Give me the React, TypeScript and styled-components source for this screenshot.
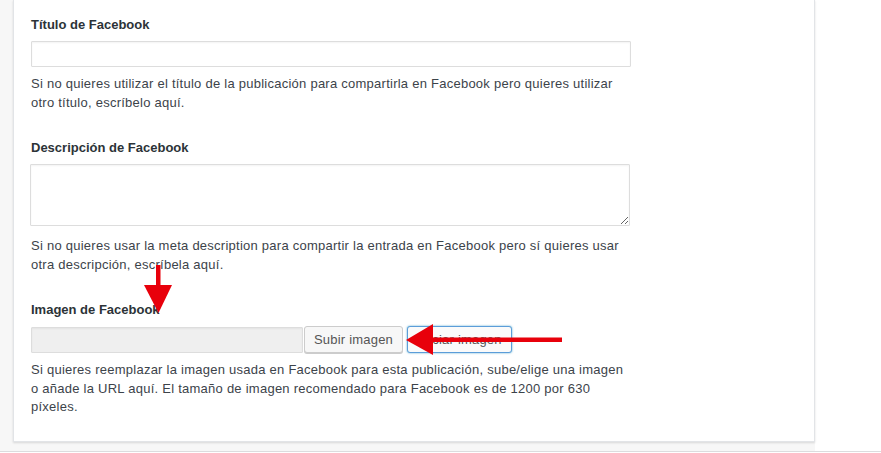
import styled, { createGlobalStyle } from "styled-components";

const GlobalStyle = createGlobalStyle`
  html, body {
    margin: 0;
    padding: 0;
    background: #fff;
  }
  body {
    font-family: "Liberation Sans", Arial, sans-serif;
    font-size: 13px;
    color: #3c434a;
  }
`;

const StyledPage = styled.div`
  position: relative;
  width: 881px;
  height: 453px;
  overflow: hidden;
`;

const StyledBase = styled.div`
  border-bottom: 1px solid #dcdcde;
`;

const StyledGutter = styled.div`
  width: 815px;
  background: #f7f7f7;
  padding: 0 0 9px 13px;
  box-sizing: border-box;
`;

const StyledPanel = styled.div`
  width: 802px;
  box-sizing: border-box;
  background: #fff;
  border: 1px solid #e2e4e7;
  border-top: none;
  box-shadow: 0 1px 2px rgba(0, 0, 0, 0.13);
  padding: 16px 17px 24px;
`;

const StyledField = styled.div<{ last?: boolean }>`
  margin-bottom: ${(props) => (props.last ? "0" : "27px")};
`;

const StyledLabel = styled.label`
  display: block;
  font-weight: 700;
  font-size: 13px;
  line-height: 18px;
  color: #2c3338;
  margin-bottom: 7px;
`;

const StyledInput = styled.input<{ readOnlyLook?: boolean }>`
  display: block;
  box-sizing: border-box;
  width: 600px;
  height: 26px;
  margin: 0;
  padding: 3px 6px;
  font: inherit;
  border: 1px solid #dddddd;
  border-radius: 1px;
  background: ${(props) => (props.readOnlyLook ? "#efefef" : "#fff")};
  box-shadow: inset 0 1px 2px rgba(0, 0, 0, 0.05);
  outline: none;
`;

const StyledTextarea = styled.textarea`
  display: block;
  box-sizing: border-box;
  width: 600px;
  height: 62px;
  margin: 0 0 0 -1px;
  padding: 4px 6px;
  font: inherit;
  border: 1px solid #dddddd;
  border-radius: 1px;
  box-shadow: inset 0 1px 2px rgba(0, 0, 0, 0.05);
  outline: none;
`;

const StyledHelp = styled.p<{ space?: number }>`
  margin: ${(props) => props.space ?? 8}px 0 0;
  font-size: 13px;
  letter-spacing: 0.25px;
  line-height: 18.5px;
  color: #3c434a;
  width: 600px;
`;

const StyledUploadRow = styled.div`
  display: flex;
  align-items: center;
  height: 27px;
`;

const StyledButton = styled.button<{ focused?: boolean }>`
  box-sizing: border-box;
  height: 27px;
  margin-left: ${(props) => (props.focused ? "4px" : "1px")};
  padding: 0 9px;
  font: inherit;
  font-size: 13px;
  letter-spacing: 0.2px;
  color: #555;
  background: ${(props) => (props.focused ? "#fafafa" : "#f7f7f7")};
  border: 1px solid ${(props) => (props.focused ? "#5b9dd9" : "#cccccc")};
  border-radius: 3px;
  box-shadow: ${(props) =>
    props.focused
      ? "0 0 2px rgba(30, 140, 190, 0.8)"
      : "0 1px 0 #cccccc"};
  white-space: nowrap;
`;

const StyledOverlay = styled.svg`
  position: absolute;
  left: 0;
  top: 0;
  pointer-events: none;
`;

const App = () => {
  return (
    <>
      <GlobalStyle />
      <StyledPage>
        <StyledBase>
          <StyledGutter>
            <StyledPanel>
              <StyledField>
                <StyledLabel>Título de Facebook</StyledLabel>
                <StyledInput type="text" />
                <StyledHelp>
                  Si no quieres utilizar el título de la publicación para
                  compartirla en Facebook pero quieres utilizar otro título,
                  escríbelo aquí.
                </StyledHelp>
              </StyledField>

              <StyledField>
                <StyledLabel>Descripción de Facebook</StyledLabel>
                <StyledTextarea />
                <StyledHelp space={11}>
                  Si no quieres usar la meta description para compartir la
                  entrada en Facebook pero sí quieres usar otra descripción,
                  escríbela aquí.
                </StyledHelp>
              </StyledField>

              <StyledField last>
                <StyledLabel>Imagen de Facebook</StyledLabel>
                <StyledUploadRow>
                  <StyledInput type="text" readOnlyLook readOnly style={{ width: 272 }} />
                  <StyledButton>Subir imagen</StyledButton>
                  <StyledButton focused>Vaciar imagen</StyledButton>
                </StyledUploadRow>
                <StyledHelp>
                  Si quieres reemplazar la imagen usada en Facebook para esta
                  publicación, sube/elige una imagen o añade la URL aquí. El
                  tamaño de imagen recomendado para Facebook es de 1200 por
                  630 píxeles.
                </StyledHelp>
              </StyledField>
            </StyledPanel>
          </StyledGutter>
        </StyledBase>

        {/* red annotation arrows */}
        <StyledOverlay width="881" height="453" viewBox="0 0 881 453">
          <rect x="156" y="265" width="4.5" height="22" fill="#e8000b" />
          <polygon points="144,285 172,285 158.5,313" fill="#e8000b" />
          <rect x="430" y="337.5" width="132" height="4.5" fill="#e8000b" />
          <polygon points="406,340 433,324 433,355" fill="#e8000b" />
        </StyledOverlay>
      </StyledPage>
    </>
  );
};

export default App;
